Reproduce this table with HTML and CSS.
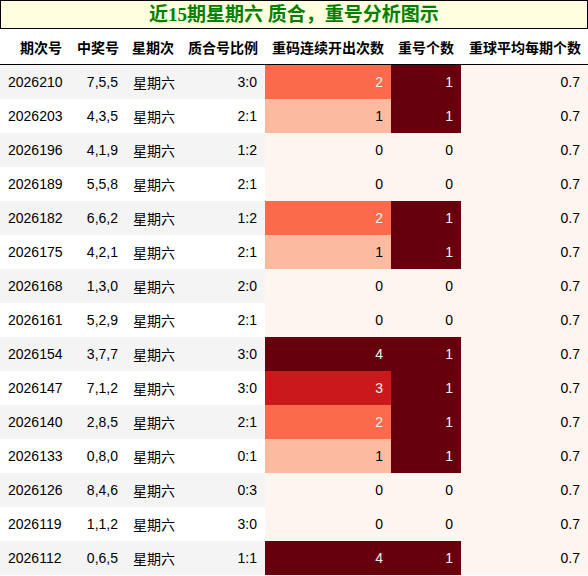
FILE: index.html
```html
<!DOCTYPE html>
<html lang="zh">
<head>
  <meta charset="UTF-8" />
  <title>近15期星期六 质合，重号分析图示</title>
  <link rel="stylesheet" href="styles.css">
</head>
<body>

  <div class="title">近15期星期六 质合，重号分析图示</div>

  <table class="stats">
    <colgroup>
      <col class="c1"><col class="c2"><col class="c3"><col class="c4"><col class="c5"><col class="c6"><col class="c7">
    </colgroup>
    <thead>
      <tr>
        <th>期次号</th>
        <th>中奖号</th>
        <th>星期次</th>
        <th>质合号比例</th>
        <th>重码连续开出次数</th>
        <th>重号个数</th>
        <th>重球平均每期个数</th>
      </tr>
    </thead>
    <tbody id="rows"></tbody>
  </table>

  <script>
    document.addEventListener("DOMContentLoaded", () => {
      const tbody = document.getElementById("rows");

      const data = [
        ["2026210", "7,5,5", "3:0", 2, 1],
        ["2026203", "4,3,5", "2:1", 1, 1],
        ["2026196", "4,1,9", "1:2", 0, 0],
        ["2026189", "5,5,8", "2:1", 0, 0],
        ["2026182", "6,6,2", "1:2", 2, 1],
        ["2026175", "4,2,1", "2:1", 1, 1],
        ["2026168", "1,3,0", "2:0", 0, 0],
        ["2026161", "5,2,9", "2:1", 0, 0],
        ["2026154", "3,7,7", "3:0", 4, 1],
        ["2026147", "7,1,2", "3:0", 3, 1],
        ["2026140", "2,8,5", "2:1", 2, 1],
        ["2026133", "0,8,0", "0:1", 1, 1],
        ["2026126", "8,4,6", "0:3", 0, 0],
        ["2026119", "1,1,2", "3:0", 0, 0],
        ["2026112", "0,6,5", "1:1", 4, 1]
      ];

      data.forEach((d) => {
        const tr = document.createElement("tr");
        tr.innerHTML =
          '<td class="first">' + d[0] + '</td>' +
          '<td>' + d[1] + '</td>' +
          '<td class="left">星期六</td>' +
          '<td>' + d[2] + '</td>' +
          '<td class="r' + d[3] + '">' + d[3] + '</td>' +
          '<td class="r' + (d[4] * 4) + '">' + d[4] + '</td>' +
          '<td class="r0">0.7</td>';
        tbody.appendChild(tr);
      });
    });
  </script>

</body>
</html>
```

FILE: styles.css
```css
body {
  margin: 0;
  font-family: "Liberation Sans", "Noto Sans CJK SC", sans-serif;
  font-size: 14px;
  color: #000;
  background: white;
}
.title {
  height: 27px;
  border: 1px solid #000;
  background: #ffffe0;
  color: #008000;
  font-family: "Liberation Serif", "Noto Sans CJK SC", serif;
  font-weight: bold;
  font-size: 19px;
  line-height: 27px;
  text-align: center;
}
.stats {
  border-collapse: collapse;
  table-layout: fixed;
  width: 588px;
}
.c1 { width: 69px; }
.c2 { width: 57px; }
.c3 { width: 55px; }
.c4 { width: 84px; }
.c5 { width: 126px; }
.c6 { width: 70px; }
.c7 { width: 127px; }
.stats th {
  height: 35px;
  padding: 0 7px 0 0;
  text-align: right;
  font-weight: bold;
  border-bottom: 1px solid #000;
  white-space: nowrap;
}
.stats td {
  height: 34px;
  padding: 0 8px 0 0;
  text-align: right;
  white-space: nowrap;
}
.stats td.first { text-align: left; padding: 0 0 0 8px; }
.stats td.left { text-align: left; padding: 0 0 0 7px; }
.stats tbody tr:nth-child(odd) { background: #f4f4f4; }
.stats td.r0 { background: #fff5f0; color: #000; }
.stats td.r1 { background: #fcbba1; color: #000; }
.stats td.r2 { background: #fb6a4a; color: #f1f1f1; }
.stats td.r3 { background: #cb181d; color: #f1f1f1; }
.stats td.r4 { background: #67000d; color: #f1f1f1; }
```
